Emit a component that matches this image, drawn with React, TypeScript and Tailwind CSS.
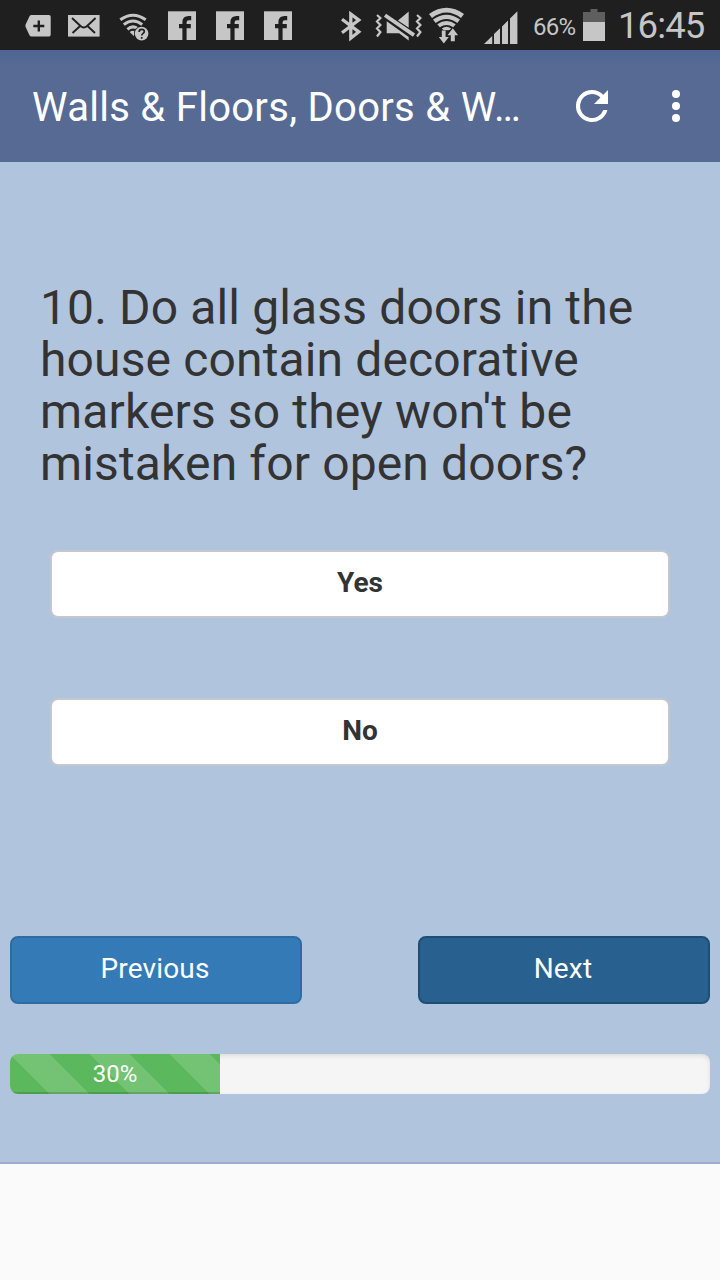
import type { ReactNode } from "react";

// Status bar glyphs share one 50px tall coordinate space
function StatusIcon({ x, width, className = "", children }: { x: number; width: number; className?: string; children: ReactNode }) {
    return (
        <svg className={`shrink-0 ${className}`} width={width} height={50} viewBox={`${x} 0 ${width} 50`} fill="#c6c6c6">
            {children}
        </svg>
    );
}

function FacebookIcon({ className }: { className: string }) {
    return (
        <StatusIcon x={168} width={28} className={className}>
            <path d="M168 11.3h28V40h-28z" />
            <path d="M184.5 40V22.5q0-4.3 4.2-4.3h2.5M179 26.2h11.8" fill="none" stroke="#1f1f1f" strokeWidth="4.2" />
        </StatusIcon>
    );
}

function StatusBar() {
    return (
        <div className="flex h-[50px] shrink-0 bg-[#1f1f1f] text-[#c6c6c6]">
            <StatusIcon x={25} width={26} className="ml-[25px]">
                <path d="M31.5 15H49q1.7 0 1.7 1.7v18.1q0 1.7-1.7 1.7H31.5q-1.3 0-2-1.2L25.6 27q-.5-1.2 0-2.4l3.9-8.4q.7-1.2 2-1.2z" />
                <path d="M38.8 20.5v11M33.3 26h11" stroke="#1f1f1f" strokeWidth="2.4" />
            </StatusIcon>

            <StatusIcon x={68} width={32} className="ml-[17px]">
                <path d="M68 15h31.6v21.6H68z" />
                <path d="M72 18l8.5 8q3.3 3 6.6 0l8.5-8M72.5 33l8.2-7.5M95 33l-8-7.5" fill="none" stroke="#1f1f1f" strokeWidth="1.9" />
            </StatusIcon>

            <StatusIcon x={119} width={30} className="ml-[19px]">
                <g fill="none" stroke="#c6c6c6" strokeWidth="3">
                    <path d="M120.3 19.8q12.7-9.2 25.4 0" />
                    <path d="M123.8 24.6q9.2-7.2 18.4 0" />
                    <path d="M127.4 29.3q5.6-4.8 11.2 0" />
                </g>
                <path d="M129.7 32q3.3-2.6 6 0l-2 4z" />
                <circle cx="141.6" cy="33.6" r="7.6" fill="#1f1f1f" />
                <circle cx="141.6" cy="33.6" r="6.8" />
                <path d="M139.1 32q0-2.6 2.6-2.6t2.6 2.2q0 1.2-1.4 2-1.2.8-1.2 2M141.7 37v1.8" fill="none" stroke="#1f1f1f" strokeWidth="1.7" />
            </StatusIcon>

            <FacebookIcon className="ml-[19px]" />
            <FacebookIcon className="ml-[20px]" />
            <FacebookIcon className="ml-[20px]" />

            <StatusIcon x={340} width={22} className="ml-[48px]">
                <path d="M342 19.3l16.8 12.6-8 6.3V14l8 6.1L342 32.7" fill="none" stroke="#c6c6c6" strokeWidth="3.3" />
            </StatusIcon>

            <StatusIcon x={375} width={48} className="ml-[13px]">
                <path d="M377 15l3.4 3-3.4 3.5 3.4 3.5-3.4 3.5 3.4 3.5-3.4 4.5M417 15l3.4 3-3.4 3.5 3.4 3.5-3.4 3.5 3.4 3.5-3.4 4.5" fill="none" stroke="#c6c6c6" strokeWidth="2.2" />
                <path d="M398 20.5l10.7-9v16.3z" />
                <path d="M386.7 21.3L408.7 37v3.6l-9.6-7.4h-12.4z" />
                <path d="M385 15.3l29 19.8" stroke="#c6c6c6" strokeWidth="3.8" />
            </StatusIcon>

            <StatusIcon x={428} width={37} className="ml-[5px]">
                <path d="M429 14q17.5-12.5 35 0l-3 4q-14.5-11-29 0z" />
                <path d="M433 19.6q13.5-9.6 27 0l-2.7 3.3q-10.8-7.8-21.6 0z" />
                <path d="M437.3 24.3q9.2-6.6 18.4 0l-2.5 2.9q-6.7-4.6-13.4 0z" />
                <path d="M441.8 28.4q4.7-3.2 9.4 0l-3.7 3.4h-2z" />
                <path d="M440.6 30.2h12v4h-12z" fill="#1f1f1f" />
                <path d="M441.8 30.6h3.8v6.4h3.2l-5 6.5-5-6.5h3z" />
                <path d="M450.8 41.3v-6h-3.3l5.3-7 5.3 7h-3.3v6z" stroke="#1f1f1f" strokeWidth="1" paintOrder="stroke" />
            </StatusIcon>

            <StatusIcon x={484} width={34} className="ml-[19px]">
                <path d="M484 44l8.2-8v8zM494 34l6-5.7V44h-6zM502 26.5l6-6V44h-6zM510 18.5l7.4-7.3V44H510z" />
            </StatusIcon>

            <span className="ml-[15px] w-[45px] text-[24px] leading-[54px] tracking-[-0.7px]">66%</span>

            <StatusIcon x={583} width={22} className="ml-[5px]">
                <path d="M590.5 9h7v3h7.5v10h-22V12h7.5z" fill="#5f5f5f" />
                <path d="M583 22h22v19h-22z" />
            </StatusIcon>

            <span className="ml-[13px] text-[36.5px] leading-[51px] tracking-[-0.9px] whitespace-nowrap">16:45</span>
        </div>
    );
}

function AppBar() {
    return (
        <header className="flex h-28 shrink-0 items-center bg-[#566a94] bg-linear-to-b from-[#4f6692] to-[#566a94] to-15% pl-8 text-white">
            <h1 className="w-[490px] pt-1 text-[40px] leading-[48px] tracking-[0.29px] whitespace-nowrap">Walls &amp; Floors, Doors &amp; W…</h1>
            <svg className="ml-[46px]" width="48" height="48" viewBox="0 0 24 24" fill="currentColor">
                <path d="M17.65 6.35A7.96 7.96 0 0 0 12 4a8 8 0 1 0 7.73 10h-2.08A6 6 0 1 1 12 6c1.66 0 3.14.69 4.22 1.78L13 11h7V4z" />
            </svg>
            <svg className="ml-9" width="48" height="48" viewBox="0 0 24 24" fill="currentColor">
                <circle cx="12" cy="6" r="2" />
                <circle cx="12" cy="12" r="2" />
                <circle cx="12" cy="18" r="2" />
            </svg>
        </header>
    );
}

function AnswerButton({ label }: { label: string }) {
    return (
        <button className="h-[68px] w-full rounded-lg border-2 border-[#c4c7cc] bg-white pb-0.5 text-[28px] leading-[40px] font-bold text-[#333]">
            {label}
        </button>
    );
}

export default function App() {
    const progress = 30;

    return (
        <div className="flex h-[1280px] w-[720px] flex-col overflow-hidden bg-[#fafafa] font-['Roboto',sans-serif]">
            <StatusBar />
            <AppBar />

            <main className="flex h-[1002px] shrink-0 flex-col border-b-2 border-[#9dadcb] bg-[#b0c4de] px-2.5">
                <h2 className="mt-[120px] px-[30px] text-[48px] leading-[52px] tracking-[0.14px] whitespace-nowrap text-[#333]">
                    10. Do all glass doors in the
                    <br />
                    house contain decorative
                    <br />
                    markers so they won't be
                    <br />
                    mistaken for open doors?
                </h2>

                <div className="mt-[60px] flex flex-col gap-20 px-10">
                    <AnswerButton label="Yes" />
                    <AnswerButton label="No" />
                </div>

                <div className="mt-[170px] flex justify-between text-[28px] leading-[40px] tracking-[0.15px] text-white">
                    <button className="h-[68px] w-[292px] rounded-lg border-2 border-[#2e6da4] bg-[#337ab7] pr-0.5 pb-0.5">Previous</button>
                    <button className="h-[68px] w-[292px] rounded-lg border-2 border-[#204d74] bg-[#286090] pr-0.5 pb-0.5">Next</button>
                </div>

                <div className="mt-[50px] h-10 overflow-hidden rounded-lg bg-[#f5f5f5] shadow-[inset_0_2px_4px_rgba(0,0,0,0.1)]">
                    <div
                        className="h-full bg-[#5cb85c] bg-[linear-gradient(45deg,rgba(255,255,255,.15)_25%,transparent_25%,transparent_50%,rgba(255,255,255,.15)_50%,rgba(255,255,255,.15)_75%,transparent_75%,transparent)] bg-[length:80px_80px] text-center text-[24px] leading-[40px] text-white shadow-[inset_0_-2px_0_rgba(0,0,0,0.15)]"
                        style={{ width: `${progress}%` }}
                    >
                        {progress}%
                    </div>
                </div>
            </main>
        </div>
    );
}
